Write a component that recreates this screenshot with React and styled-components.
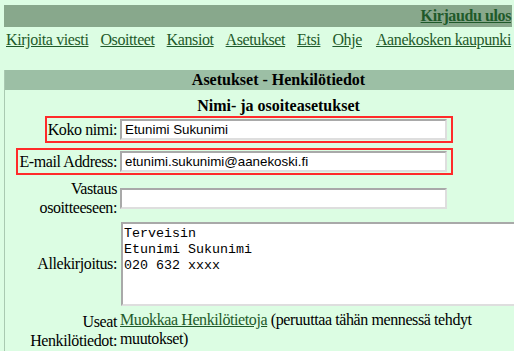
import React from "react";
import styled, { createGlobalStyle } from "styled-components";

const GlobalStyle = createGlobalStyle`
  html, body {
    margin: 0;
    padding: 0;
    overflow: hidden;
    background: #dcfde3;
  }
  body {
    font-family: "Liberation Serif", "Times New Roman", serif;
    font-size: 16px;
    letter-spacing: -0.4px;
    color: #000;
  }
`;

const Page = styled.div`
  width: 508px;
  padding: 5px 2px 0 4px;
`;

const TopBar = styled.div`
  height: 22px;
  background: #88a88c;
  display: flex;
  justify-content: flex-end;
  align-items: center;
  padding-right: 1px;
`;

const Link = styled.a`
  color: #1f5a2a;
  text-decoration: underline;
  font-weight: ${(p) => (p.$bold ? 700 : 400)};
  white-space: ${(p) => (p.$wrap ? "normal" : "nowrap")};
  cursor: pointer;
`;

const Nav = styled.nav`
  display: flex;
  justify-content: space-between;
  align-items: center;
  height: 22px;
  padding: 0 1px 0 2px;
  margin-top: 2px;
  white-space: nowrap;
`;

const NavGroup = styled.div`
  display: flex;
  gap: 12px;
`;

const Panel = styled.section`
  margin-top: 19px;
  width: 547px;
  border-left: 1px solid #a9c9b1;
`;

const PanelHeader = styled.div`
  height: 20px;
  line-height: 20px;
  background: #9cbfa5;
  text-align: center;
  font-weight: 700;
  letter-spacing: 0;
`;

const SectionTitle = styled.div`
  text-align: center;
  font-weight: 700;
  letter-spacing: 0;
  padding: 7px 0 0;
`;

const Row = styled.div`
  display: grid;
  grid-template-columns: 114px 1fr;
  align-items: ${(p) => (p.$start ? "start" : "center")};
  margin-top: ${(p) => p.$top || 0}px;
`;

const LabelCell = styled.div`
  display: flex;
  justify-content: flex-end;
  text-align: right;
`;

const Label = styled.span`
  display: inline-flex;
  align-items: center;
  padding: 0 2px 0 1px;
  height: ${(p) => (p.$hl ? "27px" : "auto")};
  box-sizing: border-box;
  border: 2px solid ${(p) => (p.$hl ? "#ff2a2a" : "transparent")};
  border-right: none;
  border-left-width: ${(p) => (p.$hl ? 2 : 0)}px;
  line-height: 18px;
`;

const FieldCell = styled.div`
  display: flex;
  align-items: center;
  padding: 1px 2px 1px 1px;
  box-sizing: border-box;
  height: ${(p) => (p.$hl ? "27px" : "auto")};
  width: ${(p) => (p.$hl ? "334px" : "auto")};
  border: 2px solid ${(p) => (p.$hl ? "#ff2a2a" : "transparent")};
  border-left: none;
  border-width: ${(p) => (p.$hl ? "2px 2px 2px 0" : "0")};
`;

const TextInput = styled.input`
  width: 327px;
  height: 21px;
  box-sizing: border-box;
  border: 2px solid;
  border-color: #a9a9a9 #dedede #dedede #a9a9a9;
  background: #fff;
  padding: 0 3px;
  font-family: "Liberation Sans", Arial, sans-serif;
  font-size: 13.33px;
  letter-spacing: 0;
  color: #000;
  outline: none;
`;

const SignatureArea = styled.textarea`
  width: 430px;
  height: 84px;
  box-sizing: border-box;
  border: 2px solid;
  border-color: #a9a9a9 #dedede #dedede #a9a9a9;
  background: #fff;
  padding: 2px 1px;
  margin-left: 1px;
  font-family: "Liberation Mono", "Courier New", monospace;
  font-size: 13.33px;
  letter-spacing: 0;
  line-height: 16px;
  resize: none;
  color: #000;
  outline: none;
`;

const Note = styled.div`
  max-width: 395px;
  padding-left: 1px;
  line-height: 19px;
`;

const TwoLine = styled.span`
  line-height: 19px;
`;

export default function App() {
  return (
    <>
      <GlobalStyle />
      <Page>
        <TopBar>
          <Link $bold>Kirjaudu ulos</Link>
        </TopBar>
        <Nav>
          <NavGroup>
            <Link>Kirjoita viesti</Link>
            <Link>Osoitteet</Link>
            <Link>Kansiot</Link>
            <Link>Asetukset</Link>
            <Link>Etsi</Link>
            <Link>Ohje</Link>
          </NavGroup>
          <Link>Aanekosken kaupunki</Link>
        </Nav>
        <Panel>
          <PanelHeader>Asetukset - Henkilötiedot</PanelHeader>
          <SectionTitle>Nimi- ja osoiteasetukset</SectionTitle>
          <Row $top={1}>
            <LabelCell>
              <Label $hl>Koko nimi:</Label>
            </LabelCell>
            <FieldCell $hl>
              <TextInput defaultValue="Etunimi Sukunimi" />
            </FieldCell>
          </Row>
          <Row $top={5}>
            <LabelCell>
              <Label $hl>E-mail Address:</Label>
            </LabelCell>
            <FieldCell $hl>
              <TextInput defaultValue="etunimi.sukunimi@aanekoski.fi" />
            </FieldCell>
          </Row>
          <Row $top={2}>
            <LabelCell>
              <Label>
                <TwoLine>
                  Vastaus
                  <br />
                  osoitteeseen:
                </TwoLine>
              </Label>
            </LabelCell>
            <FieldCell>
              <TextInput defaultValue="" />
            </FieldCell>
          </Row>
          <Row $top={2}>
            <LabelCell>
              <Label>Allekirjoitus:</Label>
            </LabelCell>
            <FieldCell>
              <SignatureArea
                defaultValue={"Terveisin\nEtunimi Sukunimi\n020 632 xxxx"}
              />
            </FieldCell>
          </Row>
          <Row $top={3} $start>
            <LabelCell>
              <Label>
                <TwoLine>
                  Useat
                  <br />
                  Henkilötiedot:
                </TwoLine>
              </Label>
            </LabelCell>
            <Note>
              <Link $wrap>Muokkaa Henkilötietoja</Link> (peruuttaa tähän mennessä
              tehdyt muutokset)
            </Note>
          </Row>
        </Panel>
      </Page>
    </>
  );
}
